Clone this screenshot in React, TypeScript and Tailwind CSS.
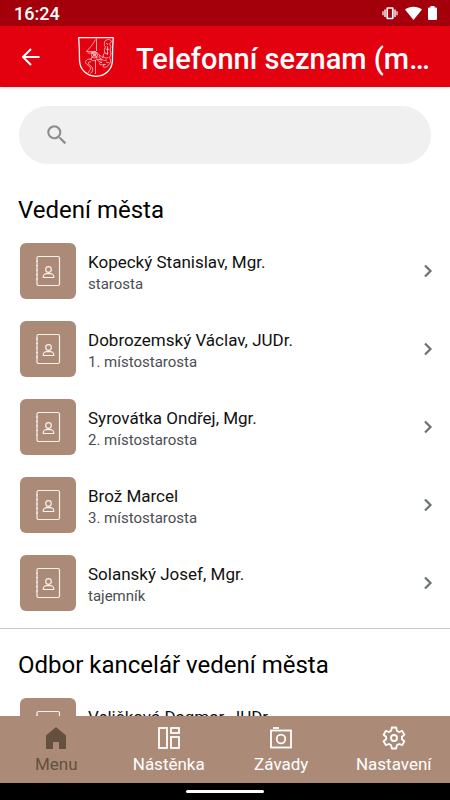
import React from 'react';

interface Contact {
    name: string;
    role: string;
}

interface Section {
    title: string;
    contacts: Contact[];
}

const sections: Section[] = [
    {
        title: 'Vedení města',
        contacts: [
            { name: 'Kopecký Stanislav, Mgr.', role: 'starosta' },
            { name: 'Dobrozemský Václav, JUDr.', role: '1. místostarosta' },
            { name: 'Syrovátka Ondřej, Mgr.', role: '2. místostarosta' },
            { name: 'Brož Marcel', role: '3. místostarosta' },
            { name: 'Solanský Josef, Mgr.', role: 'tajemník' },
        ],
    },
    {
        title: 'Odbor kancelář vedení města',
        contacts: [{ name: 'Veličková Dagmar, JUDr.', role: '' }],
    },
];

const StatusBar = () => (
    <div className="flex h-[26px] shrink-0 items-center justify-between bg-[#a4000c] pr-[13px] pl-[14px] text-white">
        <span className="pt-0.5 text-[18px] leading-6 font-medium">16:24</span>
        <div className="flex items-center">
            <svg className="mr-[7px] h-4 w-4" viewBox="0 0 16 16" fill="none" stroke="currentColor">
                <rect x="5.200" y="3" width="5.600" height="10.500" rx="0.600" strokeWidth="1.700" />
                <path d="M3 4.500v7.500M13 4.500v7.500" strokeWidth="1.400" />
                <path d="M1 6.200v4M15 6.200v4" strokeWidth="1.200" />
            </svg>
            <svg className="mr-1.5 h-4 w-[17px]" viewBox="0 0 17 16" fill="currentColor">
                <path d="M0 4.500C5 .7 12 .7 17 4.500L8.500 15z" />
            </svg>
            <svg className="h-4 w-[9px]" viewBox="0 0 9 16" fill="currentColor">
                <path d="M2.500 1h4v1.400H8a1 1 0 0 1 1 1V14a1 1 0 0 1-1 1H1a1 1 0 0 1-1-1V3.400a1 1 0 0 1 1-1h1.500z" />
            </svg>
        </div>
    </div>
);

const CityArms = () => (
    <svg className="h-10 w-9 shrink-0" viewBox="0 0 36 40" fill="none" stroke="#fff" strokeLinejoin="round">
        <path d="M.7.700h34.600c-.6 6-.8 13-.8 22 0 9.500-7.200 16.600-16.500 16.600S1.500 32.200 1.500 22.700C1.500 14 1.300 8 .7.700z" strokeWidth="1.300" />
        <g strokeWidth="0.700" strokeOpacity="0.9">
            <path d="M18.500 1.500v12.500M17.500 2.500C15 7.500 11.500 11 8.500 14.500h9.500M9.500 16h8M17.500 23v14" />
            <circle cx="16.500" cy="18" r="3" />
            <circle cx="16.800" cy="18" r="1.200" />
            <path d="M13.500 15l6 6M19.500 15l-6 6M14 20.500c-2 1.500-.5 3.500 1 3 1.500.8 3.500 0 3.500-2" />
            <path d="M13.500 22.500c-4-1.500-7 1.500-5.500 4 1 1.700 4 2.500 4.500 4.500.4 1.800-1.500 2.800-2.500 5M13 25c-2-.5-3.500.5-2.500 2 1 1.600 4.500 2.500 4.300 5.500-.1 1.600-1 3-2.500 4" />
            <path d="M27 4c3-2.500 6.500-1.500 6.500 1-1.500.5-2 1.500-1.500 3 1.500 1.500.5 3.500 0 5 1.500 2.500 1 5.500-.5 7.500 1.500 2.500 1.500 5-.5 7-1 2-4 3.500-5.500 2.500-1-1 .5-2.500 2-2.500-2-.5-3.500 1-5.500 0-1.500-1 .5-2.500 2-2-2.500-.5-4-1.500-5-3 1.500-.5 3 .5 4.500.5-2-1.500-3-3-2-4.500 1.500 0 2 2 3.500 2.500-.5-2 .5-4 2-5.500-1-2-1-4 .5-5.500-1.500-1.500-1.500-4-.5-6z" />
            <path d="M28 6.500c1.500-.5 2 .8 1 1.600M27.500 11.500c1.500 1.500 3 1.500 3.500 0M26.500 15.500c1.500 2 3.500 1.500 4 .2M25 19c1.500 2.500 4.500 2.500 5.500 1M22 21c2 2 4 3 7 2M28 25c1 1 2.500.8 3 0M20 16.500l2 2.500M29.500 9v9" />
        </g>
    </svg>
);

const Header = () => (
    <header className="z-10 flex h-[61px] shrink-0 items-center bg-[#e3000f] pr-4 pl-[19px] text-white shadow-sm">
        <button type="button" aria-label="Zpět" className="mr-[35px] cursor-pointer">
            <svg className="h-6 w-6" viewBox="0 0 24 24" fill="none" stroke="currentColor" strokeWidth="2">
                <path d="M20.500 12H4.500M12 4l-8 8 8 8" />
            </svg>
        </button>
        <CityArms />
        <h1 className="ml-[22px] min-w-0 flex-1 truncate pt-1 text-[29px] leading-9 font-medium">Telefonní seznam (m…</h1>
    </header>
);

const SearchBox = () => (
    <label className="mx-[19px] mt-[19px] flex h-[58px] items-center rounded-full bg-[#f0f0f0] pr-6 pl-[25px]">
        <svg className="h-[26px] w-[26px] shrink-0" viewBox="0 0 24 24" fill="#8f8f8f">
            <path d="M15.500 14h-.79l-.28-.27A6.470 6.470 0 0 0 16 9.500 6.500 6.500 0 1 0 9.500 16c1.610 0 3.090-.59 4.230-1.570l.27.28v.79l5 4.990L20.490 19l-4.990-5zm-6 0C7.010 14 5 11.990 5 9.500S7.010 5 9.500 5 14 7.010 14 9.500 11.990 14 9.500 14z" />
        </svg>
        <input type="search" aria-label="Hledat" className="ml-3 min-w-0 flex-1 bg-transparent text-lg outline-none" />
    </label>
);

const ContactIcon = () => (
    <span className="flex h-14 w-14 shrink-0 items-center justify-center rounded-md bg-[#ab8b77]">
        <svg className="h-8 w-[26px]" viewBox="0 0 26 32" fill="none" stroke="#f7f0eb" strokeWidth="1.200">
            <rect x="2" y="1.500" width="22.500" height="29" rx="1.500" />
            <path d="M1 6h2M1 10.500h2M1 15h2M1 19.500h2M1 24h2" />
            <circle cx="13.500" cy="14.500" r="2.800" />
            <path d="M8.300 22.500v-1c0-1.800 1.800-2.900 3.200-2.900h4c1.400 0 3.200 1.100 3.200 2.900v1z" />
        </svg>
    </span>
);

const ContactRow = ({ name, role }: Contact) => (
    <li>
        <a href="#" className="flex h-[78px] items-center pr-[17px] pl-5">
            <ContactIcon />
            <span className="ml-3 min-w-0 flex-1 pt-0.5">
                <span className="block truncate text-[17px] leading-6 text-[#111]">{name}</span>
                <span className="block h-5 truncate text-[15px] leading-5 text-[#4a4e51]">{role}</span>
            </span>
            <svg className="h-5 w-[10px] shrink-0" viewBox="0 0 10 20" fill="none" stroke="#6b7277" strokeWidth="2.200">
                <path d="M2 4.500l5.500 5.500L2 15.500" />
            </svg>
        </a>
    </li>
);

const MenuIcon = () => (
    <svg className="h-6 w-6" viewBox="0 0 24 24" fill="currentColor">
        <path d="M12 1l10 8.500V23h-7v-7H9v7H2V9.500z" />
    </svg>
);

const BoardIcon = () => (
    <svg className="h-6 w-6" viewBox="0 0 24 24" fill="none" stroke="currentColor" strokeWidth="1.800">
        <rect x="2" y="2" width="8" height="20" />
        <rect x="14" y="2" width="8" height="5" />
        <rect x="14" y="11" width="8" height="11" />
    </svg>
);

const CameraIcon = () => (
    <svg className="h-6 w-6" viewBox="0 0 24 24" fill="none" stroke="currentColor" strokeWidth="1.800">
        <rect x="2" y="4.500" width="20" height="17" />
        <path d="M4 2h6" />
        <circle cx="12" cy="13" r="4.300" />
    </svg>
);

const SettingsIcon = () => (
    <svg className="h-6 w-6" viewBox="0 0 24 24" fill="none" stroke="currentColor" strokeWidth="1.800" strokeLinejoin="round">
        <path d="M9.800 1.500h4.400l.6 3.200 2.300 1.300 3.100-1.100 2.200 3.800-2.500 2.100v2.400l2.500 2.100-2.200 3.800-3.100-1.100-2.300 1.300-.6 3.200H9.800l-.6-3.200L6.900 18l-3.100 1.100-2.200-3.800 2.500-2.100v-2.400L1.600 8.700l2.200-3.800L6.900 6l2.300-1.300z" />
        <circle cx="12" cy="12" r="3" />
    </svg>
);

const tabs = [
    { label: 'Menu', Icon: MenuIcon, active: true },
    { label: 'Nástěnka', Icon: BoardIcon, active: false },
    { label: 'Závady', Icon: CameraIcon, active: false },
    { label: 'Nastavení', Icon: SettingsIcon, active: false },
];

const TabBar = () => (
    <nav className="grid h-[67px] shrink-0 grid-cols-4 bg-[#ab8b77]">
        {tabs.map(({ label, Icon, active }) => (
            <button
                key={label}
                type="button"
                aria-current={active ? 'page' : undefined}
                className={`flex cursor-pointer flex-col items-center pt-[10px] ${active ? 'text-[#655040]' : 'text-white'}`}
            >
                <Icon />
                <span className="mt-0.5 text-[17px] leading-6">{label}</span>
            </button>
        ))}
    </nav>
);

const App = () => (
    <div className="flex h-screen flex-col bg-white font-['Roboto',sans-serif]">
        <StatusBar />
        <Header />
        <main className="min-h-0 flex-1 overflow-y-auto [scrollbar-width:none]">
            <SearchBox />
            {sections.map(({ title, contacts }, i) => (
                <section key={title} className={i > 0 ? 'border-t border-[#c8c8c8] pt-5' : 'mb-1.5 pt-[30px]'}>
                    <h2 className="px-[18px] text-2xl leading-8 text-black">{title}</h2>
                    <ul className="mt-1.5">
                        {contacts.map((contact) => (
                            <ContactRow key={contact.name} {...contact} />
                        ))}
                    </ul>
                </section>
            ))}
        </main>
        <TabBar />
        <footer className="flex h-[17px] shrink-0 items-center justify-center bg-black">
            <span className="h-[3px] w-[78px] rounded-full bg-white" />
        </footer>
    </div>
);

export default App;
